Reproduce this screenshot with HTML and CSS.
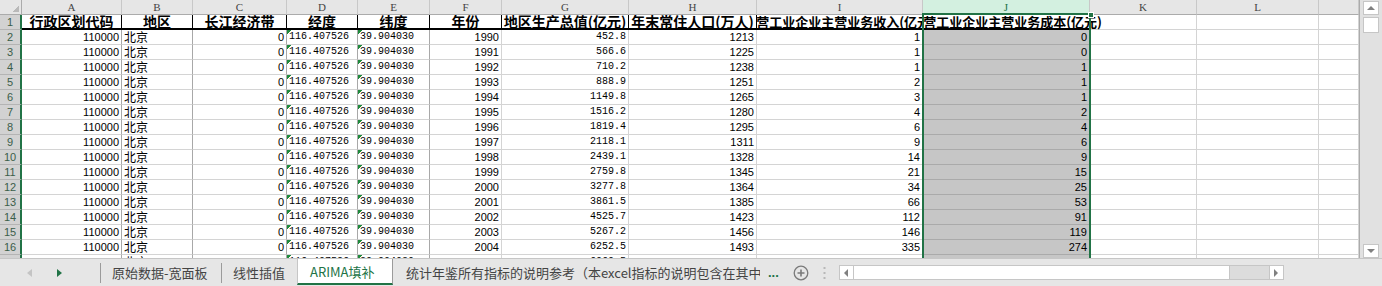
FILE: index.html
```html
<!DOCTYPE html>
<html lang="zh">
<head>
    <meta charset="UTF-8">
    <title>ARIMA填补</title>
<link rel="stylesheet" href="styles.css">
</head>
<body>
    <div class="workbook">
        <div class="main">
            <div class="sheet">
                <div class="selection"><span class="handle"></span></div>
            </div>
            <div class="vscroll">
                <div class="vbtn"><span class="arrow-up"></span></div>
                <div class="vthumb"></div>
                <div class="vtrack"></div>
                <div class="vbtn"><span class="arrow-down"></span></div>
            </div>
        </div>
        <div class="tabs">
            <div class="nav">
                <span class="nav-left"></span>
                <span class="nav-right"></span>
            </div>
            <span class="sep"></span>
            <div class="tab tab-1">原始数据-宽面板</div>
            <span class="sep"></span>
            <div class="tab tab-2">线性插值</div>
            <div class="tab active">ARIMA填补</div>
            <div class="tab tab-4"><span>统计年鉴所有指标的说明参考（本excel指标的说明包含在其中）</span></div>
            <span class="more">...</span>
            <svg class="add" width="16" height="16" viewBox="0 0 16 16">
                <circle cx="8" cy="8" r="6.8" fill="none" stroke="#7a7a7a" stroke-width="1.3"/>
                <path d="M8 4.5v7M4.5 8h7" stroke="#7a7a7a" stroke-width="1.6"/>
            </svg>
            <svg class="grip" width="3" height="12" viewBox="0 0 3 12">
                <rect x="0.5" y="0" width="2" height="2" fill="#b8b8b8"/>
                <rect x="0.5" y="5" width="2" height="2" fill="#b8b8b8"/>
                <rect x="0.5" y="10" width="2" height="2" fill="#b8b8b8"/>
            </svg>
            <div class="hscroll">
                <div class="hbtn"><span class="arrow-left"></span></div>
                <div class="hthumb"></div>
                <div class="htrack"></div>
                <div class="hbtn"><span class="arrow-right"></span></div>
            </div>
        </div>
    </div>
    <script>
    let sheet = document.querySelector(".sheet");

    function cell(cls, text) {
        let d = document.createElement("div");
        d.className = "cell " + cls;
        if (text !== undefined) d.textContent = text;
        sheet.appendChild(d);
        return d;
    }

    // column letters
    let letters = ["A","B","C","D","E","F","G","H","I","J","K","L",""];
    cell("ch corner");
    letters.forEach(function(l) {
        cell("ch" + (l == "J" ? " ch-sel" : ""), l);
    });

    // header row
    let headers = ["行政区划代码","地区","长江经济带","经度","纬度","年份","地区生产总值(亿元)","年末常住人口(万人)","规模以上私营工业企业主营业务收入(亿元)","规模以上私营工业企业主营业务成本(亿元)"];
    cell("rh", "1");
    headers.forEach(function(h, i) {
        let c = cell("hd" + (i == 8 ? " long" : "") + (i == 9 ? " long spill" : ""));
        let s = document.createElement("span");
        s.textContent = h;
        c.appendChild(s);
    });
    cell(""); cell(""); cell("");

    let gdp = ["452.8","566.6","710.2","888.9","1149.8","1516.2","1819.4","2118.1","2439.1","2759.8","3277.8","3861.5","4525.7","5267.2","6252.5","6969.5"];
    let pop = [1213,1225,1238,1251,1265,1280,1295,1311,1328,1345,1364,1385,1423,1456,1493,1538];
    let income = [1,1,1,2,3,4,6,9,14,21,34,66,112,146,335,468];
    let cost = [0,0,1,1,1,2,4,6,9,15,25,53,91,119,274,390];

    for (let i = 0; i < 16; i++) {
        cell("rh", String(i + 2));
        cell("n dk", "110000");
        cell("t cjk dk", "北京");
        cell("n dk", "0");
        cell("t m tri dk", "116.407526");
        cell("t m tri dk", "39.904030");
        cell("n", String(1990 + i));
        cell("n m", gdp[i]);
        cell("n", String(pop[i]));
        cell("n", String(income[i]));
        cell("n sel", String(cost[i]));
        cell(""); cell(""); cell("");
    }
    </script>
</body>
</html>
```

FILE: styles.css
```css
* {
    box-sizing: border-box;
}
body {
    margin: 0;
    width: 1382px;
    height: 286px;
    overflow: hidden;
    background: #e6e6e6;
    font-family: "Liberation Sans", "Noto Sans CJK SC", sans-serif;
}
.workbook {
    display: flex;
    flex-direction: column;
    height: 286px;
}
.main {
    display: flex;
    height: 258px;
}

/* grid */
.sheet {
    position: relative;
    width: 1360px;
    height: 258px;
    overflow: hidden;
    background: #fff;
    border-right: 1px solid #ababab;
    display: grid;
    grid-template-columns: 22px 100px 71px 94px 71px 72px 72px 127px 128px 166px 167px 107px 122px 40px;
    grid-auto-rows: 15px;
    align-content: start;
}
.cell {
    border-right: 1px solid #d4d4d4;
    border-bottom: 1px solid #d4d4d4;
    font-size: 11px;
    line-height: 14px;
    white-space: nowrap;
    overflow: hidden;
    padding: 0 2px;
    color: #000;
}
.ch {
    background: #e6e6e6;
    color: #444;
    font-family: "Liberation Serif", serif;
    font-size: 11px;
    text-align: center;
    border-right-color: #c8c8c8;
    border-bottom-color: #ababab;
}
.ch.corner {
    background: #e6e6e6 linear-gradient(to top left, #b9b9b9 50%, transparent 50%) no-repeat right 2px bottom 2px / 7px 7px;
    border-right-color: #ababab;
}
.ch-sel {
    background: #d3f0e0;
    color: #217346;
}
.rh {
    background: #d2d2d2;
    color: #3b5e4a;
    text-align: center;
    font-size: 11px;
    border-right: 2px solid #217346;
    border-bottom-color: #b4b4b4;
    padding: 0;
}

/* header row */
.hd {
    display: flex;
    justify-content: center;
    align-items: center;
    font-family: "Noto Sans CJK SC", sans-serif;
    font-weight: bold;
    font-size: 14px;
    line-height: 13px;
    border-right: 1px solid #000;
    border-bottom: 2px solid #000;
    padding: 0;
}
.hd.long {
    justify-content: flex-end;
    font-size: 13px;
}
.hd.long span {
    margin-right: -13px;
    flex-shrink: 0;
}
.hd.spill {
    position: relative;
    z-index: 1;
    overflow: visible;
    clip-path: inset(0 -40px 0 0);
}

/* data cells */
.n {
    text-align: right;
}
.t {
    text-align: left;
}
.m {
    font-family: "Liberation Mono", monospace;
    font-size: 10px;
}
.cjk {
    font-family: "Noto Sans CJK SC", sans-serif;
    font-size: 12px;
}
.tri {
    background: linear-gradient(135deg, #1f8a3c 3px, transparent 3px) no-repeat left top / 6px 6px;
}
.dk {
    border-right-color: #a8a8a8;
}
.sel {
    background: #c6c6c6;
    border-bottom-color: #aaaaaa;
}
.selection {
    position: absolute;
    left: 922px;
    top: 13px;
    width: 169px;
    height: 260px;
    border: 2px solid #217346;
    border-bottom: 0;
    z-index: 2;
}
.handle {
    position: absolute;
    right: -5px;
    top: -3px;
    width: 6px;
    height: 6px;
    background: #217346;
    border: 1px solid #fff;
}

/* vertical scrollbar */
.vscroll {
    width: 22px;
    height: 258px;
    background: #e1e1e1;
    display: flex;
    flex-direction: column;
    padding: 1px 0 0 3px;
}
.vbtn {
    width: 16px;
    height: 14px;
    background: #fff;
    border: 1px solid #c6c6c6;
    display: flex;
    align-items: center;
    justify-content: center;
}
.vthumb {
    width: 16px;
    height: 16px;
    margin-top: 2px;
    background: #fff;
    border: 1px solid #c6c6c6;
}
.vtrack {
    flex: 1;
}
.arrow-up {
    border-left: 4px solid transparent;
    border-right: 4px solid transparent;
    border-bottom: 4px solid #808080;
}
.arrow-down {
    border-left: 4px solid transparent;
    border-right: 4px solid transparent;
    border-top: 4px solid #808080;
}

/* sheet tabs */
.tabs {
    height: 28px;
    display: flex;
    align-items: center;
    border-top: 1px solid #c6c6c6;
    background: #e6e6e6;
    font-family: "Noto Sans CJK SC", sans-serif;
    font-size: 13px;
    color: #444;
}
.nav {
    width: 100px;
    display: flex;
    align-items: center;
    padding-left: 27px;
    gap: 25px;
}
.nav-left {
    border-top: 4px solid transparent;
    border-bottom: 4px solid transparent;
    border-right: 5px solid #c4c4c4;
}
.nav-right {
    border-top: 4px solid transparent;
    border-bottom: 4px solid transparent;
    border-left: 5px solid #217346;
}
.sep {
    width: 1px;
    height: 20px;
    background: #9b9b9b;
}
.tab {
    height: 100%;
    display: flex;
    align-items: center;
    white-space: nowrap;
}
.tab-1 {
    width: 120px;
    padding-left: 11px;
}
.tab-2 {
    width: 75px;
    padding-left: 11px;
}
.active {
    width: 96px;
    padding-left: 12px;
    background: #fff;
    color: #217346;
    border-left: 1px solid #c6c6c6;
    border-right: 1px solid #9b9b9b;
    border-bottom: 2px solid #217346;
    height: 26px;
    align-self: flex-start;
}
.tab-4 {
    width: 367px;
    padding-left: 13px;
    overflow: hidden;
}
.more {
    margin-left: 8px;
    color: #217346;
    font-weight: bold;
    font-family: "Liberation Sans", sans-serif;
    font-size: 13px;
}
.add {
    margin-left: 14px;
}
.grip {
    margin-left: 14px;
}
.hscroll {
    margin-left: 13px;
    width: 445px;
    height: 15px;
    display: flex;
    border: 1px solid #c6c6c6;
    background: #dcdcdc;
}
.hbtn {
    width: 13px;
    background: #fff;
    display: flex;
    align-items: center;
    justify-content: center;
}
.hthumb {
    width: 377px;
    background: #fff;
    border-left: 1px solid #c6c6c6;
    border-right: 1px solid #c6c6c6;
}
.htrack {
    flex: 1;
    border-right: 1px solid #c6c6c6;
}
.arrow-left {
    border-top: 4px solid transparent;
    border-bottom: 4px solid transparent;
    border-right: 4px solid #808080;
}
.arrow-right {
    border-top: 4px solid transparent;
    border-bottom: 4px solid transparent;
    border-left: 4px solid #808080;
}
```
